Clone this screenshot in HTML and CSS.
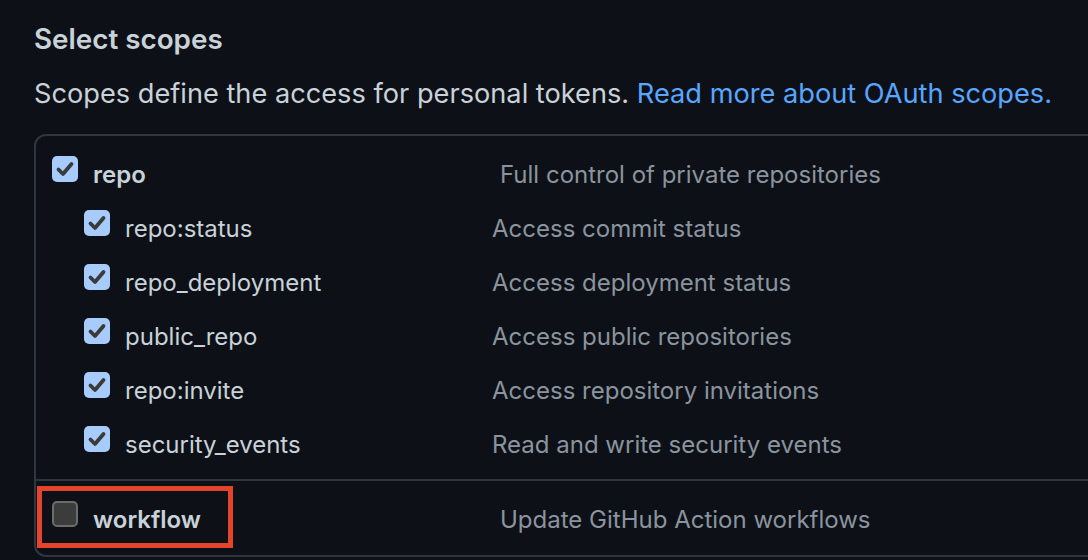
FILE: index.html
```html
<!DOCTYPE html>
<html>
<head>
<meta charset="utf-8">
<link rel="stylesheet" href="styles.css">
</head>
<body>
<div class="page">
  <h3 class="title">Select scopes</h3>
  <p class="intro">Scopes define the access for personal tokens. <a class="link" href="#">Read more about OAuth scopes.</a></p>
  <div class="scopes">
    <div class="group">
      <div class="row top">
        <span class="cb checked"><svg viewBox="0 0 26 26"><path d="M6.5 13.5 L11 18 L19.5 8" fill="none" stroke="#3a3a3a" stroke-width="3.8" stroke-linecap="round" stroke-linejoin="round"/></svg></span>
        <span class="label strong">repo</span>
        <span class="note">Full control of private repositories</span>
      </div>
      <div class="subs">
        <div class="row sub">
          <span class="cb checked"><svg viewBox="0 0 26 26"><path d="M6.5 13.5 L11 18 L19.5 8" fill="none" stroke="#3a3a3a" stroke-width="3.8" stroke-linecap="round" stroke-linejoin="round"/></svg></span>
          <span class="label">repo:status</span>
          <span class="note">Access commit status</span>
        </div>
        <div class="row sub">
          <span class="cb checked"><svg viewBox="0 0 26 26"><path d="M6.5 13.5 L11 18 L19.5 8" fill="none" stroke="#3a3a3a" stroke-width="3.8" stroke-linecap="round" stroke-linejoin="round"/></svg></span>
          <span class="label">repo_deployment</span>
          <span class="note">Access deployment status</span>
        </div>
        <div class="row sub">
          <span class="cb checked"><svg viewBox="0 0 26 26"><path d="M6.5 13.5 L11 18 L19.5 8" fill="none" stroke="#3a3a3a" stroke-width="3.8" stroke-linecap="round" stroke-linejoin="round"/></svg></span>
          <span class="label">public_repo</span>
          <span class="note">Access public repositories</span>
        </div>
        <div class="row sub">
          <span class="cb checked"><svg viewBox="0 0 26 26"><path d="M6.5 13.5 L11 18 L19.5 8" fill="none" stroke="#3a3a3a" stroke-width="3.8" stroke-linecap="round" stroke-linejoin="round"/></svg></span>
          <span class="label">repo:invite</span>
          <span class="note">Access repository invitations</span>
        </div>
        <div class="row sub">
          <span class="cb checked"><svg viewBox="0 0 26 26"><path d="M6.5 13.5 L11 18 L19.5 8" fill="none" stroke="#3a3a3a" stroke-width="3.8" stroke-linecap="round" stroke-linejoin="round"/></svg></span>
          <span class="label">security_events</span>
          <span class="note">Read and write security events</span>
        </div>
      </div>
    </div>
    <div class="group second">
      <div class="row top highlighted">
        <span class="cb unchecked"></span>
        <span class="label strong">workflow</span>
        <span class="note">Update GitHub Action workflows</span>
        <span class="marker"></span>
      </div>
    </div>
  </div>
</div>
</body>
</html>
```

FILE: styles.css
```css
html, body {
  margin: 0;
  padding: 0;
}
body {
  background: #0d1117;
  font-family: Inter, "Noto Sans", sans-serif;
  color: #c9d1d9;
  width: 1088px;
  height: 560px;
  overflow: hidden;
}
.page {
  padding: 21px 0 0 34px;
}
.title {
  margin: 0;
  font-size: 27.8px;
  font-weight: 600;
  line-height: 36px;
  color: #c9d1d9;
}
.intro {
  margin: 19px 0 0;
  font-size: 27.2px;
  line-height: 36px;
  color: #c9d1d9;
}
.link {
  color: #58a6ff;
  text-decoration: none;
}
.scopes {
  margin-top: 22px;
  margin-right: -60px;
  border: 2px solid #30363d;
  border-radius: 12px;
}
.group {
  padding: 6px 0 13px;
}
.group.second {
  padding-top: 6px;
  padding-bottom: 14px;
  border-top: 2px solid #30363d;
}
.row {
  display: flex;
  align-items: center;
  height: 54px;
  position: relative;
}
.row.top {
  padding-left: 16px;
}
.row.sub {
  padding-left: 48px;
}
.cb {
  flex: 0 0 26px;
  width: 26px;
  height: 26px;
  box-sizing: border-box;
  border-radius: 5px;
  display: block;
}
.cb svg {
  display: block;
  width: 26px;
  height: 26px;
}
.cb.checked {
  background: #a7cbfb;
}
.cb.unchecked {
  background: #3c3c3c;
  border: 2px solid #6c6c6c;
}
.label,
.note {
  font-size: 24px;
  padding-top: 10px;
}
.label {
  margin-left: 15px;
  color: #c9d1d9;
}
.label.strong {
  font-weight: 600;
}
.row.top .label {
  width: 407px;
}
.row.sub .label {
  width: 367px;
}
.note {
  color: #8b949e;
}
.marker {
  position: absolute;
  left: 1px;
  top: -1px;
  width: 196px;
  height: 62px;
  box-sizing: border-box;
  border: 5px solid #e5442c;
}
```
